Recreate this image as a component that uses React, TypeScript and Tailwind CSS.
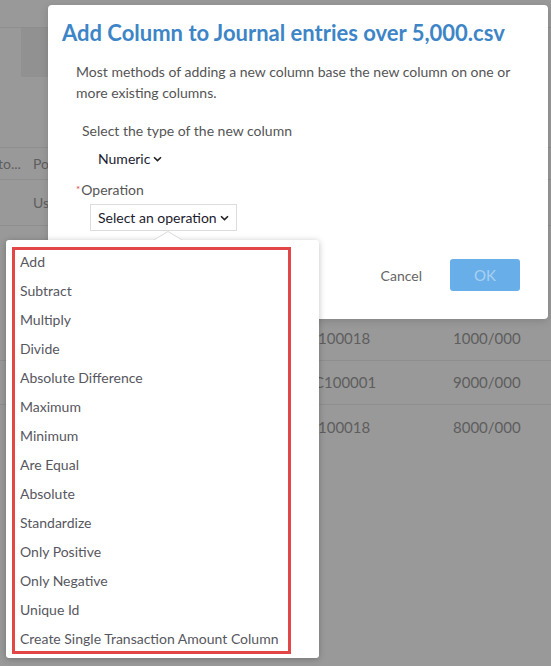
import React from "react";

const ops = [
  "Add",
  "Subtract",
  "Multiply",
  "Divide",
  "Absolute Difference",
  "Maximum",
  "Minimum",
  "Are Equal",
  "Absolute",
  "Standardize",
  "Only Positive",
  "Only Negative",
  "Unique Id",
  "Create Single Transaction Amount Column",
];

function Chevron() {
  return (
    <svg width="9" height="6" viewBox="0 0 9 6" className="ml-[3px] inline-block">
      <path d="M1 1.2 L4.5 4.6 L8 1.2" fill="none" stroke="#222" strokeWidth="1.6" />
    </svg>
  );
}

export default function App() {
  return (
    <div
      className="relative w-[551px] h-[666px] overflow-hidden bg-[#999999] text-[#555]"
      style={{ fontFamily: "Lato, 'Open Sans', sans-serif" }}
    >
      {/* background page */}
      <div className="flex flex-col">
        <div className="h-[28px] border-b border-[#8e8e8e]" />
        <div className="flex">
          <div className="ml-[21px] w-[60px] h-[49px] bg-[#919191]" />
        </div>
        <div className="h-[71px] border-b border-[#8e8e8e]" />
        <div className="h-[32px] border-b border-[#8e8e8e] flex items-center text-[14px] text-[#5e5e5e]">
          <span className="ml-[-2px] w-[35px]">to...</span>
          <span>Po</span>
        </div>
        <div className="h-[46px] border-b border-[#8e8e8e] flex items-center text-[14px] text-[#5e5e5e]">
          <span className="ml-[33px]">Us</span>
        </div>
        <div className="h-[91px]" />
        <div className="h-[44px] border-b border-[#8e8e8e] flex items-center text-[15px] text-[#5e5e5e]">
          <span className="ml-[318px] w-[135px]">100018</span>
          <span>1000/000</span>
        </div>
        <div className="h-[44px] border-b border-[#8e8e8e] flex items-center text-[15px] text-[#5e5e5e]">
          <span className="ml-[314px] w-[139px]">C100001</span>
          <span>9000/000</span>
        </div>
        <div className="h-[44px] flex items-center text-[15px] text-[#5e5e5e]">
          <span className="ml-[318px] w-[135px]">100018</span>
          <span>8000/000</span>
        </div>
      </div>

      {/* modal */}
      <div className="absolute left-[48px] top-[5px] w-[500px] h-[314px] bg-white rounded-[4px] shadow-[0_2px_8px_rgba(0,0,0,0.15)]">
        <div className="pl-[14px] pt-[13px] text-[22px] leading-[30px] font-bold text-[#3d85c6]">
          Add Column to Journal entries over 5,000.csv
        </div>
        <div className="pl-[28px] pr-[30px] pt-[13px] text-[14px] leading-[21px] text-[#555]">
          Most methods of adding a new column base the new column on one or more existing columns.
        </div>
        <div className="pl-[34px] pt-[17px] text-[14px] leading-[21px] text-[#555]">
          Select the type of the new column
        </div>
        <div className="pl-[50px] pt-[7px] text-[14px] leading-[21px] text-[#1c1c2e] flex items-center">
          Numeric
          <Chevron />
        </div>
        <div className="pl-[28px] pt-[10px] text-[14px] leading-[21px] text-[#555] flex">
          <span className="text-[#e0443a] text-[10px] leading-[14px] mr-[1px] mt-[3px]">*</span>
          Operation
        </div>
        <div className="pl-[42px] pt-[4px] flex">
          <div className="h-[27px] px-[7px] border border-[#dcdcdc] flex items-center text-[14px] text-[#1c1c2e]">
            Select an operation
            <Chevron />
          </div>
        </div>
        <div className="absolute right-[28px] top-[254px] flex items-center gap-[28px]">
          <span className="text-[14px] text-[#666]">Cancel</span>
          <div className="w-[70px] h-[32px] rounded-[3px] bg-[#68afe9] flex items-center justify-center text-[15px] text-[#a9d0f0]">
            OK
          </div>
        </div>
      </div>

      {/* dropdown */}
      <div className="absolute left-[6px] top-[240px] w-[313px] h-[418px] bg-white rounded-[3px] shadow-[0_1px_6px_rgba(0,0,0,0.25)] pt-[7px] pl-[6px]">
        <svg className="absolute left-[147px] top-[-9px]" width="30" height="10" viewBox="0 0 30 10">
          <path d="M0 9.5 L15 0.5 L30 9.5" fill="white" stroke="#dadada" strokeWidth="1" />
          <rect x="0" y="9" width="30" height="2" fill="white" />
        </svg>
        <div className="w-[279px] h-[407px] overflow-hidden border-[3px] border-[#e24646] flex flex-col">
          {ops.map((o) => (
            <div key={o} className="h-[29px] shrink-0 pl-[5px] pb-[7px] flex items-center text-[14px] text-[#575760] whitespace-nowrap">
              {o}
            </div>
          ))}
        </div>
      </div>
    </div>
  );
}
